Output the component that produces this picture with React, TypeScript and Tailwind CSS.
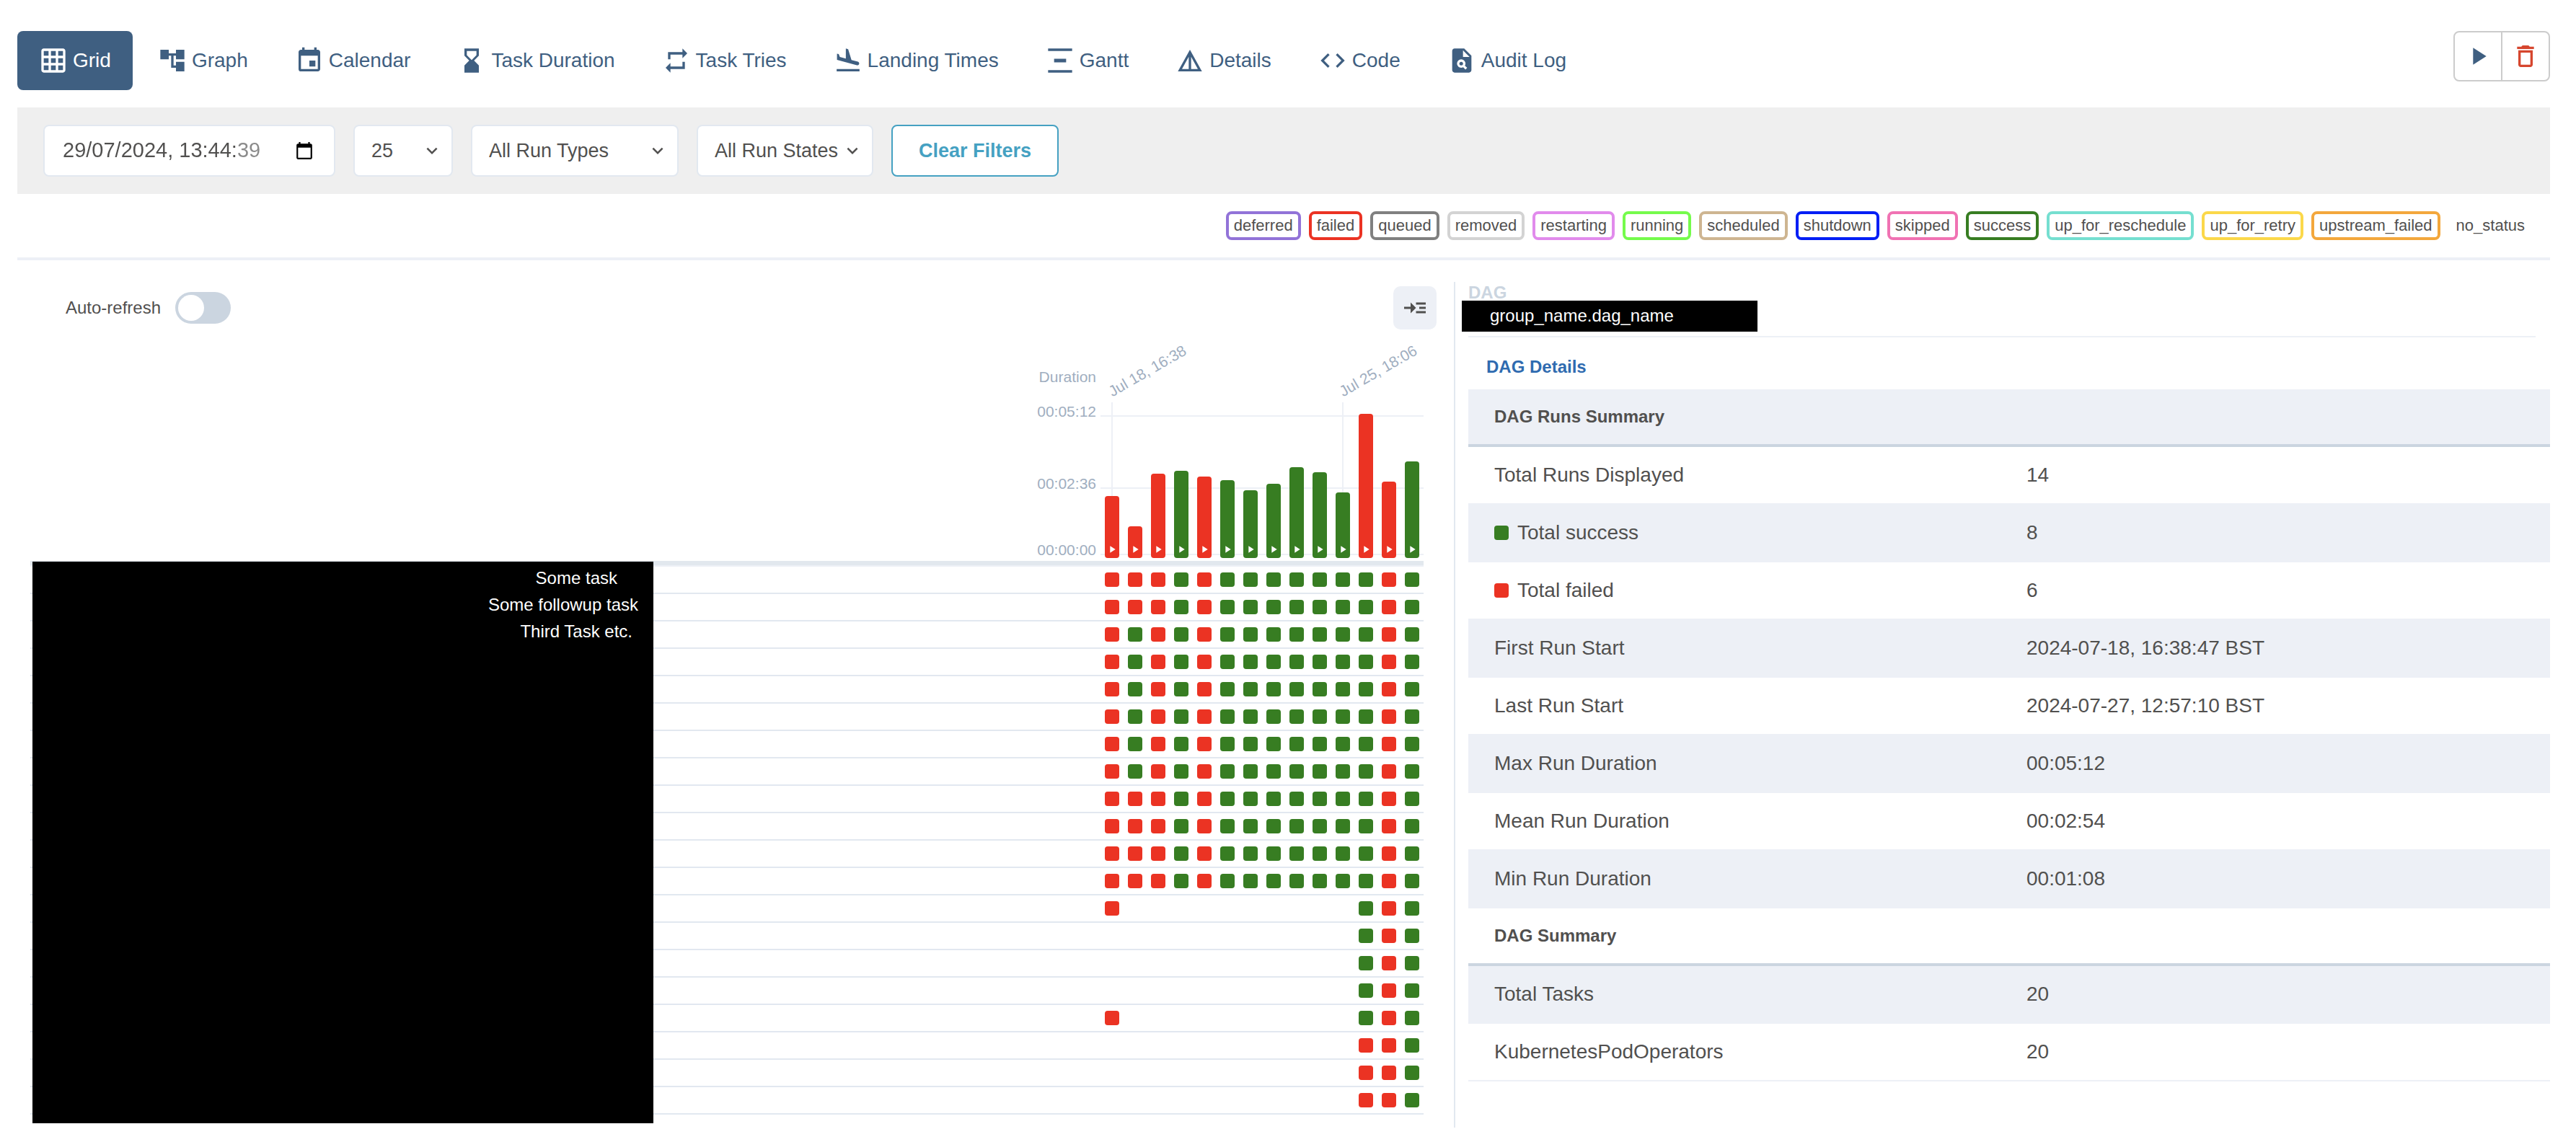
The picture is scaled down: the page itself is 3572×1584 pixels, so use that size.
import React from "react";
import {
  MdAccountTree,
  MdCalendarToday,
  MdCode,
  MdDeleteOutline,
  MdDetails,
  MdEvent,
  MdExpandMore,
  MdFlightLand,
  MdGridOn,
  MdHourglassBottom,
  MdPlagiarism,
  MdPlayArrow,
  MdReadMore,
  MdRepeat,
  MdVerticalDistribute,
} from "react-icons/md";
import type { IconType } from "react-icons";
import clsx from "clsx";

const tabs: { label: string; icon: IconType }[] = [
  { label: "Grid", icon: MdGridOn },
  { label: "Graph", icon: MdAccountTree },
  { label: "Calendar", icon: MdEvent },
  { label: "Task Duration", icon: MdHourglassBottom },
  { label: "Task Tries", icon: MdRepeat },
  { label: "Landing Times", icon: MdFlightLand },
  { label: "Gantt", icon: MdVerticalDistribute },
  { label: "Details", icon: MdDetails },
  { label: "Code", icon: MdCode },
  { label: "Audit Log", icon: MdPlagiarism },
];

const states = [
  { name: "deferred", border: "border-[#9273d8]" },
  { name: "failed", border: "border-[#eb3323]" },
  { name: "queued", border: "border-[#808080]" },
  { name: "removed", border: "border-[#d3d3d3]" },
  { name: "restarting", border: "border-[#e18bec]" },
  { name: "running", border: "border-[#75fb4c]" },
  { name: "scheduled", border: "border-[#ceb591]" },
  { name: "shutdown", border: "border-[#001ef5]" },
  { name: "skipped", border: "border-[#f072b3]" },
  { name: "success", border: "border-[#377d22]" },
  { name: "up_for_reschedule", border: "border-[#75dfd0]" },
  { name: "up_for_retry", border: "border-[#fbd84a]" },
  { name: "upstream_failed", border: "border-[#f3a73c]" },
  { name: "no_status", border: "border-white" },
];

type Run = { failed: boolean; height: number; tick?: string };

const runs: Run[] = [
  { failed: true, height: 86, tick: "Jul 18, 16:38" },
  { failed: true, height: 44 },
  { failed: true, height: 117 },
  { failed: false, height: 121 },
  { failed: true, height: 113 },
  { failed: false, height: 108 },
  { failed: false, height: 94 },
  { failed: false, height: 103 },
  { failed: false, height: 126 },
  { failed: false, height: 119 },
  { failed: false, height: 91, tick: "Jul 25, 18:06" },
  { failed: true, height: 200 },
  { failed: true, height: 106 },
  { failed: false, height: 134 },
];

// One string per task, one letter per run: f = failed, s = success, - = no instance.
const instances = [
  "fffsfsssssssfs",
  "fffsfsssssssfs",
  "fsfsfsssssssfs",
  "fsfsfsssssssfs",
  "fsfsfsssssssfs",
  "fsfsfsssssssfs",
  "fsfsfsssssssfs",
  "fsfsfsssssssfs",
  "fffsfsssssssfs",
  "fffsfsssssssfs",
  "fffsfsssssssfs",
  "fffsfsssssssfs",
  "f----------sfs",
  "-----------sfs",
  "-----------sfs",
  "-----------sfs",
  "f----------sfs",
  "-----------ffs",
  "-----------ffs",
  "-----------ffs",
];

type Row = { label: string; value?: string; swatch?: string };

const details: Row[] = [
  { label: "DAG Runs Summary" },
  { label: "Total Runs Displayed", value: "14" },
  { label: "Total success", value: "8", swatch: "bg-[#377d22]" },
  { label: "Total failed", value: "6", swatch: "bg-[#eb3323]" },
  { label: "First Run Start", value: "2024-07-18, 16:38:47 BST" },
  { label: "Last Run Start", value: "2024-07-27, 12:57:10 BST" },
  { label: "Max Run Duration", value: "00:05:12" },
  { label: "Mean Run Duration", value: "00:02:54" },
  { label: "Min Run Duration", value: "00:01:08" },
  { label: "DAG Summary" },
  { label: "Total Tasks", value: "20" },
  { label: "KubernetesPodOperators", value: "20" },
];

function Nav() {
  return (
    <div className="flex items-start justify-between">
      <nav aria-label="DAG views" className="flex gap-[5px]">
        {tabs.map(({ label, icon: Icon }, i) => (
          <a
            key={label}
            href={"#" + label.toLowerCase().replace(" ", "-")}
            aria-current={i === 0 ? "page" : undefined}
            className={clsx(
              "flex h-[82px] items-center gap-[7px] rounded-lg px-[30px] text-[28px] leading-10 whitespace-nowrap",
              i === 0 ? "bg-[#3f5f81] text-white" : "text-[#3f5f81]",
            )}
          >
            <Icon size={40} aria-hidden />
            {label}
          </a>
        ))}
      </nav>
      <div className="flex h-[70px] divide-x-2 divide-[#ccc] rounded-lg border-2 border-[#ccc]">
        <button type="button" aria-label="Trigger DAG" className="flex w-[66px] items-center justify-center text-[#3f5f81]">
          <MdPlayArrow size={40} />
        </button>
        <button type="button" aria-label="Delete DAG" className="flex w-16 items-center justify-center text-[#d6462e]">
          <MdDeleteOutline size={40} />
        </button>
      </div>
    </div>
  );
}

function FilterSelect({ label, value, width }: { label: string; value: string; width: string }) {
  return (
    <div className={clsx("relative", width)}>
      <select
        aria-label={label}
        defaultValue={value}
        className="h-[72px] w-full appearance-none rounded-lg border-2 border-[#e2e8f0] bg-white pl-[23px] text-[27px] text-[#51504f]"
      >
        <option>{value}</option>
      </select>
      <MdExpandMore
        size={30}
        aria-hidden
        className="pointer-events-none absolute top-[21px] right-[14px] text-[#51504f]"
      />
    </div>
  );
}

function Filters() {
  return (
    <form className="mt-6 flex gap-[25px] bg-[#efefef] px-9 py-6">
      <div className="flex h-[72px] w-[405px] items-center rounded-lg border-2 border-[#e2e8f0] bg-white pr-[28px] pl-[25px]">
        <input
          type="text"
          aria-label="Base date"
          defaultValue="29/07/2024, 13:44:39"
          className="w-full min-w-0 bg-[linear-gradient(to_right,#51504f_242px,#8a8a8a_242px)] bg-clip-text text-[29px] text-transparent"
        />
        <MdCalendarToday size={26} aria-hidden className="shrink-0 text-black" />
      </div>
      <FilterSelect label="Number of runs" value="25" width="w-[138px]" />
      <FilterSelect label="Run type" value="All Run Types" width="w-[288px]" />
      <FilterSelect label="Run state" value="All Run States" width="w-[245px]" />
      <button
        type="button"
        className="h-[72px] w-[232px] rounded-lg border-2 border-[#45a1c2] bg-white text-[27px] font-bold text-[#45a1c2]"
      >
        Clear Filters
      </button>
    </form>
  );
}

function Legend() {
  return (
    <ul className="flex justify-end gap-[11px] border-b-4 border-[#edf0f6] py-6 pr-6">
      {states.map(({ name, border }) => (
        <li
          key={name}
          className={clsx("h-10 rounded-lg border-4 px-[7px] text-[22px] leading-8 text-[#51504f]", border)}
        >
          {name}
        </li>
      ))}
    </ul>
  );
}

function DurationChart() {
  return (
    <div className="flex h-[321px] justify-end pr-[42px] text-[21px] leading-6 text-[#a0aec0]">
      <div className="flex flex-col items-end pt-[54px] pr-[6px]">
        <span>Duration</span>
        <span className="mt-6">00:05:12</span>
        <span className="mt-[76px]">00:02:36</span>
        <span className="mt-[68px]">00:00:00</span>
      </div>
      <div className="relative flex items-end pb-1">
        <div className="absolute inset-x-0 top-[119px] h-[2px] bg-[#edf0f6]" />
        <div className="absolute inset-x-0 top-[219px] h-[2px] bg-[#edf0f6]" />
        <div className="absolute inset-x-0 top-[311px] h-[2px] bg-[#edf0f6]" />
        {runs.map((run, i) => (
          <div key={i} className="relative flex h-full w-8 items-end justify-center">
            {run.tick && (
              <>
                <div className="absolute top-[101px] bottom-0 left-[15px] w-[2px] bg-[#edf0f6]" />
                <span className="absolute top-[74px] left-[19px] origin-bottom-left -rotate-30 whitespace-nowrap">
                  {run.tick}
                </span>
              </>
            )}
            <button
              type="button"
              aria-label={"Run " + (i + 1)}
              className={clsx(
                "relative flex w-5 items-end justify-center rounded-[4px] pb-1 text-white",
                run.failed ? "bg-[#eb3323]" : "bg-[#377d22]",
              )}
              style={{ height: run.height }}
            >
              <MdPlayArrow size={16} className="shrink-0" />
            </button>
          </div>
        ))}
      </div>
    </div>
  );
}

function TaskGrid() {
  return (
    <div className="relative mr-[42px] ml-[18px] pb-3">
      <div className="h-2 border-b-2 border-[#edf0f6] bg-[#e2e8ee]" />
      <table className="w-full border-separate border-spacing-0" aria-label="Task instances">
        <tbody>
          {instances.map((row, r) => (
            <tr key={r}>
              <td className="h-[38px] border-b-2 border-[#e2e8f0] p-0" />
              {row.split("").map((state, c) => (
                <td key={c} className="h-[38px] w-8 border-b-2 border-[#e2e8f0] p-0">
                  {state !== "-" && (
                    <div
                      className={clsx(
                        "mx-auto size-5 rounded-[4px]",
                        state === "f" ? "bg-[#eb3323]" : "bg-[#377d22]",
                      )}
                    />
                  )}
                </td>
              ))}
            </tr>
          ))}
        </tbody>
      </table>
      <ul className="absolute top-px bottom-0 left-[3px] flex w-[861px] flex-col gap-px bg-black pt-[5px] text-right text-[24px] leading-9 text-white">
        <li className="pr-[50px]">Some task</li>
        <li className="pr-[21px]">Some followup task</li>
        <li className="pr-[29px]">Third Task etc.</li>
      </ul>
    </div>
  );
}

function GridPanel() {
  return (
    <section className="border-r-2 border-[#e2e8f0] pt-[6px] pb-[6px]">
      <div className="flex h-[60px] items-center justify-between pr-6 pl-[67px]">
        <label className="flex items-center gap-5 text-[24px] text-[#51504f]">
          Auto-refresh
          <input
            type="checkbox"
            role="switch"
            className="h-11 w-[77px] appearance-none rounded-full bg-[#cbd5e0] p-1 before:block before:size-9 before:rounded-full before:bg-white checked:before:ml-auto"
          />
        </label>
        <button
          type="button"
          aria-label="Toggle details panel"
          className="flex size-[60px] items-center justify-center rounded-[10px] bg-[#edf0f6] text-[#51504f]"
        >
          <MdReadMore size={36} />
        </button>
      </div>
      <DurationChart />
      <TaskGrid />
    </section>
  );
}

function DetailsPanel() {
  return (
    <section className="pl-[18px]">
      <div className="mr-5 border-b-2 border-[#edf0f6] pb-[6px] text-[24px]">
        <p className="h-[26px] leading-[30px] font-bold text-[#cbd5e0]">DAG</p>
        <h1 className="-ml-[9px] h-[43px] w-[410px] bg-black pl-[39px] leading-[41px] text-white">
          group_name.dag_name
        </h1>
      </div>
      <h2 className="pt-[26px] pb-4 pl-[25px] text-[24px] leading-[30px] font-bold text-[#2f6bb0]">DAG Details</h2>
      <table className="w-full table-fixed border-separate border-spacing-0 text-left text-[#51504f]">
        <colgroup>
          <col className="w-[49.2%]" />
          <col />
        </colgroup>
        <tbody>
          {details.map(({ label, value, swatch }) =>
            value === undefined ? (
              <tr key={label} className="odd:bg-[#edf0f6]">
                <th
                  colSpan={2}
                  className="h-20 border-b-4 border-[#cbd5e0] px-9 py-0 text-[24px] font-bold"
                >
                  {label}
                </th>
              </tr>
            ) : (
              <tr key={label} className="odd:bg-[#edf0f6]">
                <td className="h-20 border-b-2 border-[#edf0f6] px-9 py-0 text-[28px]">
                  <div className="flex items-center gap-3">
                    {swatch && <span className={clsx("size-5 rounded-[4px]", swatch)} />}
                    {label}
                  </div>
                </td>
                <td className="h-20 border-b-2 border-[#edf0f6] px-9 py-0 text-[28px]">{value}</td>
              </tr>
            ),
          )}
        </tbody>
      </table>
    </section>
  );
}

export default function App() {
  return (
    <div className="min-h-screen bg-white pt-[43px] pr-9 pb-5 pl-6 font-['Liberation_Sans',Arial,sans-serif]">
      <Nav />
      <Filters />
      <Legend />
      <main className="mt-[30px] grid grid-cols-[1994fr_1518fr]">
        <GridPanel />
        <DetailsPanel />
      </main>
    </div>
  );
}
